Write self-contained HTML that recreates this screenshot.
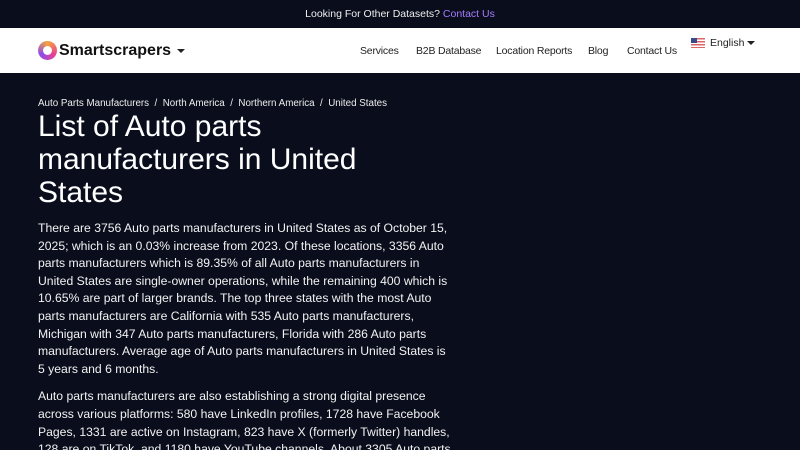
<!DOCTYPE html>
<html><head><meta charset="utf-8"><style>
*{margin:0;padding:0;box-sizing:border-box}
html,body{width:800px;height:450px;overflow:hidden}
body{background:#0a0e1c;font-family:"Liberation Sans",sans-serif;color:#fff}
.top{height:28px;background:#0a0e1c;text-align:center;font-size:10.5px;line-height:28px;color:#eee}
.top a{color:#a57bff;text-decoration:none}
.nav{height:45px;background:#fff;position:relative;color:#222}
.logo{position:absolute;left:38px;top:13px;display:flex;align-items:center;font-weight:bold;font-size:16px;color:#111}
.ring{width:19px;height:19px;border-radius:50%;background:conic-gradient(#f6a33a,#e9418e,#8b4cf0,#f6a33a);margin-right:2px;position:relative}
.ring:after{content:"";position:absolute;left:5px;top:5px;width:9px;height:9px;border-radius:50%;background:#fff}
.caret{display:inline-block;border-left:4px solid transparent;border-right:4px solid transparent;border-top:4px solid #222;margin-left:6px;vertical-align:middle}
.links a{position:absolute;top:17px;font-size:10.5px;color:#222;text-decoration:none;white-space:nowrap;letter-spacing:-0.2px}
.en{position:absolute;left:691px;top:9px;font-size:10.5px;display:flex;align-items:center}
.flag{width:14px;height:10px;margin-right:5px;background:repeating-linear-gradient(#d66 0 1.5px,#fff 1.5px 3px);position:relative}
.flag:before{content:"";position:absolute;left:0;top:0;width:6px;height:5px;background:#3c4a8a}
.main{padding:25px 38px 0}
.bc{font-size:9.8px;color:#eee;margin-bottom:1px}
h1{font-weight:normal;font-size:30px;line-height:33px;width:360px;margin-bottom:11px}
p{font-size:12.2px;line-height:17.6px;margin-bottom:10px;color:#f2f2f2;white-space:nowrap}
</style></head><body>
<div class="top">Looking For Other Datasets? <a>Contact Us</a></div>
<div class="nav">
<div class="logo"><div class="ring"></div>Smartscrapers<span class="caret"></span></div>
<div class="links"><a style="left:360px">Services</a><a style="left:416px">B2B Database</a><a style="left:496px">Location Reports</a><a style="left:588px">Blog</a><a style="left:627px">Contact Us</a></div>
<div class="en"><div class="flag"></div>English<span class="caret" style="margin-left:3px"></span></div>
</div>
<div class="main">
<div class="bc">Auto Parts Manufacturers &nbsp;/ &nbsp;North America &nbsp;/ &nbsp;Northern America &nbsp;/ &nbsp;United States</div>
<h1>List of Auto parts manufacturers in United States</h1>
<p>There are 3756 Auto parts manufacturers in United States as of October 15,<br>2025; which is an 0.03% increase from 2023. Of these locations, 3356 Auto<br>parts manufacturers which is 89.35% of all Auto parts manufacturers in<br>United States are single-owner operations, while the remaining 400 which is<br>10.65% are part of larger brands. The top three states with the most Auto<br>parts manufacturers are California with 535 Auto parts manufacturers,<br>Michigan with 347 Auto parts manufacturers, Florida with 286 Auto parts<br>manufacturers. Average age of Auto parts manufacturers in United States is<br>5 years and 6 months.</p>
<p>Auto parts manufacturers are also establishing a strong digital presence<br>across various platforms: 580 have LinkedIn profiles, 1728 have Facebook<br>Pages, 1331 are active on Instagram, 823 have X (formerly Twitter) handles,<br>128 are on TikTok, and 1180 have YouTube channels. About 3305 Auto parts</p>
</div>
</body></html>
